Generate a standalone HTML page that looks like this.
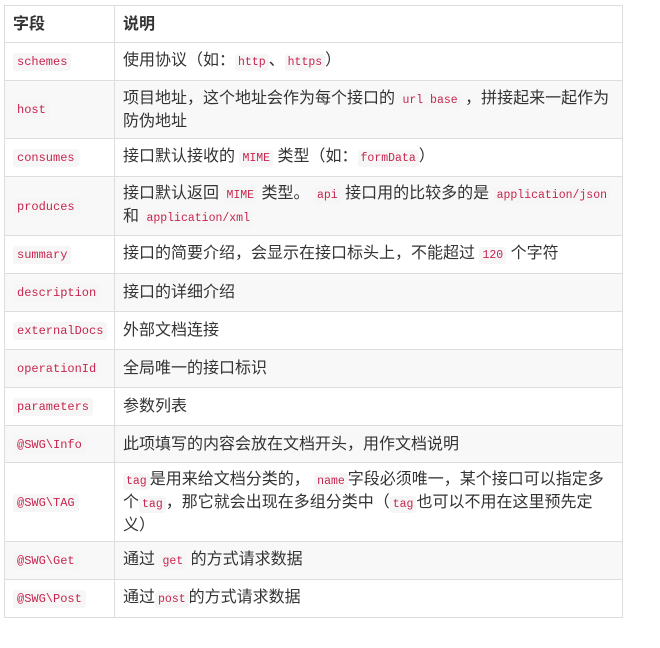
<!DOCTYPE html>
<html><head><meta charset="utf-8"><style>
body{margin:0;background:#fff;font-family:"Liberation Sans","Noto Sans CJK SC",sans-serif;font-size:16px;color:#333;}
table{position:absolute;left:4px;top:5px;border-collapse:collapse;width:619px;table-layout:fixed;}
td,th{border:1px solid #ddd;padding:0 8px;text-align:left;line-height:21px;vertical-align:middle;}
th{font-weight:bold;height:36px;}
tr:nth-child(odd) td{background:#f8f8f8;}
code{font-family:"Liberation Mono",monospace;font-size:11.5px;color:#c7254e;background:#f6f6f6;padding:2px 3px;border-radius:3px;}
td:first-child code{font-size:12px;padding:2px 4px;}
</style></head><body>
<table>
<tr><th style="width:93px">字段</th><th>说明</th></tr>
<tr style="height:38px"><td><code>schemes</code></td><td>使用协议（如：<code>http</code>、<code>https</code>）</td></tr>
<tr style="height:58px"><td><code>host</code></td><td>项目地址，这个地址会作为每个接口的 <code>url base</code> ，拼接起来一起作为防伪地址</td></tr>
<tr style="height:38px"><td><code>consumes</code></td><td>接口默认接收的 <code>MIME</code> 类型（如：<code>formData</code>）</td></tr>
<tr style="height:59px"><td><code>produces</code></td><td>接口默认返回 <code>MIME</code> 类型。 <code>api</code> 接口用的比较多的是 <code>application/json</code> 和 <code>application/xml</code></td></tr>
<tr style="height:38px"><td><code>summary</code></td><td>接口的简要介绍，会显示在接口标头上，不能超过 <code>120</code> 个字符</td></tr>
<tr style="height:38px"><td><code>description</code></td><td>接口的详细介绍</td></tr>
<tr style="height:38px"><td><code>externalDocs</code></td><td>外部文档连接</td></tr>
<tr style="height:38px"><td><code>operationId</code></td><td>全局唯一的接口标识</td></tr>
<tr style="height:38px"><td><code>parameters</code></td><td>参数列表</td></tr>
<tr style="height:37px"><td><code>@SWG\Info</code></td><td>此项填写的内容会放在文档开头，用作文档说明</td></tr>
<tr style="height:79px"><td><code>@SWG\TAG</code></td><td><code>tag</code>是用来给文档分类的， <code>name</code>字段必须唯一，某个接口可以指定多个<code>tag</code>，那它就会出现在多组分类中（<code>tag</code>也可以不用在这里预先定义）</td></tr>
<tr style="height:38px"><td><code>@SWG\Get</code></td><td>通过 <code>get</code> 的方式请求数据</td></tr>
<tr style="height:38px"><td><code>@SWG\Post</code></td><td>通过<code>post</code>的方式请求数据</td></tr>
</table>
</body></html>
